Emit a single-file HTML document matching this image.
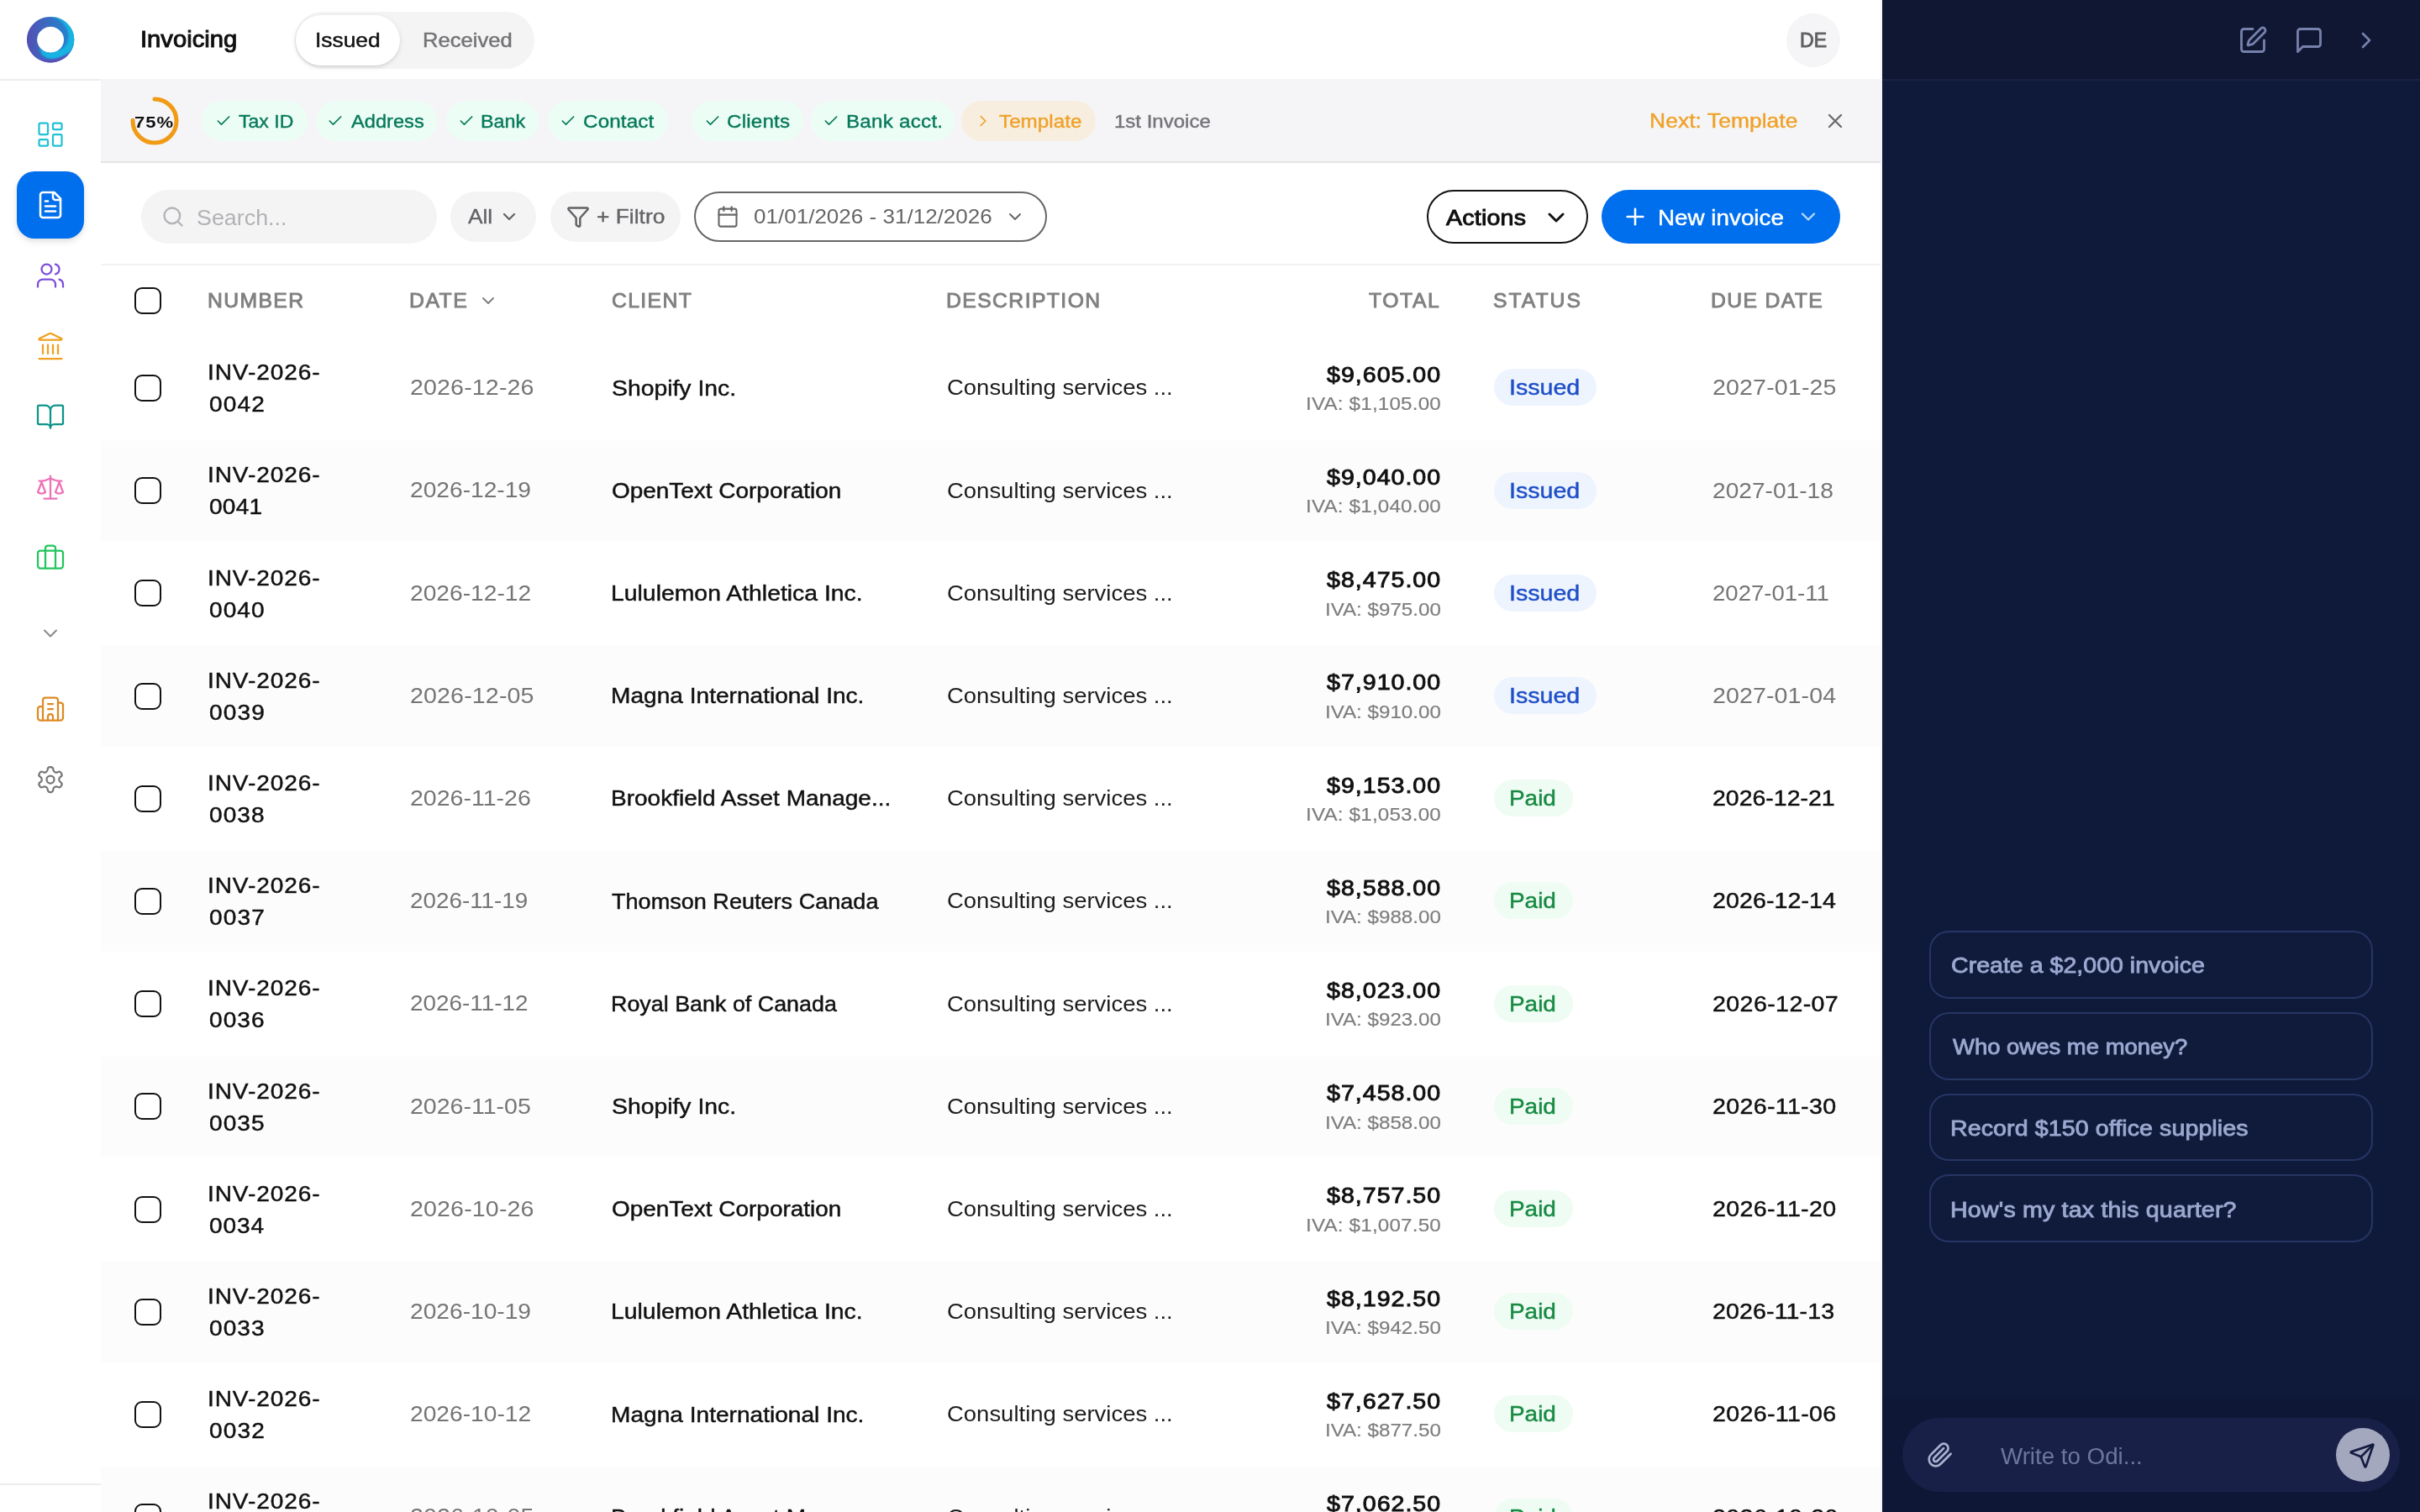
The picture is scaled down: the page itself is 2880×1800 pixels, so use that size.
<!DOCTYPE html>
<html lang="en"><head><meta charset="utf-8"><title>Invoicing</title>
<style>
html,body{margin:0;padding:0}
body{width:2880px;height:1800px;overflow:hidden;position:relative;background:#fff;
font-family:"Liberation Sans",sans-serif;-webkit-font-smoothing:antialiased}
#app{position:absolute;left:0;top:0;width:2880px;height:1800px;will-change:transform}
@media (max-width:2000px){body{width:1440px;height:900px}#app{transform:scale(.5);transform-origin:0 0}}
.b{position:absolute;box-sizing:content-box}
.t{position:absolute;white-space:nowrap;display:block;transform-origin:0 50%}
.i{position:absolute;display:block;overflow:visible}
.n{font-style:normal;margin:0 -.0625em}
</style></head>
<body>
<div id="app">
<div class="b" style="left:0px;top:0px;width:2240px;height:1800px;background:#fff;"></div>
<main aria-label="Issued invoices">
<div class="b" style="left:160px;top:446.00px;width:28px;height:28px;border:2px solid #111;border-radius:9px;background:#fff;"></div>
<span class="t" style="top:424.29px;font-size:25.5px;line-height:38px;color:#111;letter-spacing:0.817px;transform:scaleX(1.1000);-webkit-text-stroke:0.45px #111;left:246.99px;">INV-2026-</span>
<span class="t" style="top:462.29px;font-size:25.5px;line-height:38px;color:#111;letter-spacing:1.057px;transform:scaleX(1.1000);-webkit-text-stroke:0.45px #111;left:248.50px;">0042</span>
<span class="t" style="top:442.10px;font-size:26px;line-height:38px;color:#757575;letter-spacing:0.122px;transform:scaleX(1.1000);left:488.23px;">2026-12-26</span>
<span class="t" style="top:442.50px;font-size:26px;line-height:38px;color:#111;transform:scaleX(1.0901);-webkit-text-stroke:0.45px #111;left:727.67px;">Shopify Inc.</span>
<span class="t" style="top:442.30px;font-size:26px;line-height:38px;color:#1c1c1c;transform:scaleX(1.0564);left:1127.08px;">Consulting services ...</span>
<span class="t" style="top:426.70px;font-size:26px;line-height:38px;color:#111;letter-spacing:0.903px;transform:scaleX(1.1000);-webkit-text-stroke:0.9px #111;left:1579.22px;">$9,605.00</span>
<span class="t" style="top:465.15px;font-size:22px;line-height:32px;color:#7e7e7e;letter-spacing:0.172px;transform:scaleX(1.1000);-webkit-text-stroke:0.2px #7e7e7e;left:1553.50px;">IVA: $1,105.00</span>
<div class="b" style="left:1778px;top:439.40px;width:122px;height:44px;background:#eef4fe;border-radius:22px;"></div>
<span class="t" style="top:442.30px;font-size:26px;line-height:38px;color:#1f4fc8;transform:scaleX(1.0993);-webkit-text-stroke:0.45px #1f4fc8;left:1796.19px;">Issued</span>
<span class="t" style="top:442.30px;font-size:26px;line-height:38px;color:#757575;letter-spacing:0.122px;transform:scaleX(1.1000);left:2037.83px;">2027-01-25</span>
<div class="b" style="left:120px;top:524.40px;width:2120px;height:119.80px;background:#fcfcfc;"></div>
<div class="b" style="left:160px;top:568.20px;width:28px;height:28px;border:2px solid #111;border-radius:9px;background:#fff;"></div>
<span class="t" style="top:546.49px;font-size:25.5px;line-height:38px;color:#111;letter-spacing:0.817px;transform:scaleX(1.1000);-webkit-text-stroke:0.45px #111;left:246.99px;">INV-2026-</span>
<span class="t" style="top:584.49px;font-size:25.5px;line-height:38px;color:#111;letter-spacing:0.227px;transform:scaleX(1.1000);-webkit-text-stroke:0.45px #111;left:248.50px;">0041</span>
<span class="t" style="top:564.30px;font-size:26px;line-height:38px;color:#757575;transform:scaleX(1.0828);left:488.25px;">2026-12-19</span>
<span class="t" style="top:564.70px;font-size:26px;line-height:38px;color:#111;transform:scaleX(1.0745);-webkit-text-stroke:0.45px #111;left:727.56px;">OpenText Corporation</span>
<span class="t" style="top:564.50px;font-size:26px;line-height:38px;color:#1c1c1c;transform:scaleX(1.0564);left:1127.08px;">Consulting services ...</span>
<span class="t" style="top:548.90px;font-size:26px;line-height:38px;color:#111;letter-spacing:0.903px;transform:scaleX(1.1000);-webkit-text-stroke:0.9px #111;left:1579.22px;">$9,040.00</span>
<span class="t" style="top:587.35px;font-size:22px;line-height:32px;color:#7e7e7e;letter-spacing:0.172px;transform:scaleX(1.1000);-webkit-text-stroke:0.2px #7e7e7e;left:1553.50px;">IVA: $1,040.00</span>
<div class="b" style="left:1778px;top:561.60px;width:122px;height:44px;background:#eef4fe;border-radius:22px;"></div>
<span class="t" style="top:564.50px;font-size:26px;line-height:38px;color:#1f4fc8;transform:scaleX(1.0993);-webkit-text-stroke:0.45px #1f4fc8;left:1796.19px;">Issued</span>
<span class="t" style="top:564.50px;font-size:26px;line-height:38px;color:#757575;transform:scaleX(1.0817);left:2037.85px;">2027-01-18</span>
<div class="b" style="left:160px;top:690.40px;width:28px;height:28px;border:2px solid #111;border-radius:9px;background:#fff;"></div>
<span class="t" style="top:668.69px;font-size:25.5px;line-height:38px;color:#111;letter-spacing:0.817px;transform:scaleX(1.1000);-webkit-text-stroke:0.45px #111;left:246.99px;">INV-2026-</span>
<span class="t" style="top:706.69px;font-size:25.5px;line-height:38px;color:#111;letter-spacing:0.932px;transform:scaleX(1.1000);-webkit-text-stroke:0.45px #111;left:248.50px;">0040</span>
<span class="t" style="top:686.50px;font-size:26px;line-height:38px;color:#757575;transform:scaleX(1.0838);left:488.25px;">2026-12-12</span>
<span class="t" style="top:686.90px;font-size:26px;line-height:38px;color:#111;transform:scaleX(1.0913);-webkit-text-stroke:0.45px #111;left:726.58px;">Lululemon Athletica Inc.</span>
<span class="t" style="top:686.70px;font-size:26px;line-height:38px;color:#1c1c1c;transform:scaleX(1.0564);left:1127.08px;">Consulting services ...</span>
<span class="t" style="top:671.10px;font-size:26px;line-height:38px;color:#111;letter-spacing:0.903px;transform:scaleX(1.1000);-webkit-text-stroke:0.9px #111;left:1579.22px;">$8,475.00</span>
<span class="t" style="top:709.55px;font-size:22px;line-height:32px;color:#7e7e7e;transform:scaleX(1.0974);-webkit-text-stroke:0.2px #7e7e7e;left:1576.51px;">IVA: $975.00</span>
<div class="b" style="left:1778px;top:683.80px;width:122px;height:44px;background:#eef4fe;border-radius:22px;"></div>
<span class="t" style="top:686.70px;font-size:26px;line-height:38px;color:#1f4fc8;transform:scaleX(1.0993);-webkit-text-stroke:0.45px #1f4fc8;left:1796.19px;">Issued</span>
<span class="t" style="top:686.70px;font-size:26px;line-height:38px;color:#757575;transform:scaleX(1.0597);left:2037.88px;">2027-01-11</span>
<div class="b" style="left:120px;top:768.80px;width:2120px;height:119.80px;background:#fcfcfc;"></div>
<div class="b" style="left:160px;top:812.60px;width:28px;height:28px;border:2px solid #111;border-radius:9px;background:#fff;"></div>
<span class="t" style="top:790.89px;font-size:25.5px;line-height:38px;color:#111;letter-spacing:0.817px;transform:scaleX(1.1000);-webkit-text-stroke:0.45px #111;left:246.99px;">INV-2026-</span>
<span class="t" style="top:828.89px;font-size:25.5px;line-height:38px;color:#111;letter-spacing:1.015px;transform:scaleX(1.1000);-webkit-text-stroke:0.45px #111;left:248.50px;">0039</span>
<span class="t" style="top:808.70px;font-size:26px;line-height:38px;color:#757575;letter-spacing:0.122px;transform:scaleX(1.1000);left:488.23px;">2026-12-05</span>
<span class="t" style="top:809.10px;font-size:26px;line-height:38px;color:#111;transform:scaleX(1.0805);-webkit-text-stroke:0.45px #111;left:726.60px;">Magna International Inc.</span>
<span class="t" style="top:808.90px;font-size:26px;line-height:38px;color:#1c1c1c;transform:scaleX(1.0564);left:1127.08px;">Consulting services ...</span>
<span class="t" style="top:793.30px;font-size:26px;line-height:38px;color:#111;letter-spacing:0.903px;transform:scaleX(1.1000);-webkit-text-stroke:0.9px #111;left:1579.22px;">$7,910.00</span>
<span class="t" style="top:831.75px;font-size:22px;line-height:32px;color:#7e7e7e;transform:scaleX(1.0974);-webkit-text-stroke:0.2px #7e7e7e;left:1576.51px;">IVA: $910.00</span>
<div class="b" style="left:1778px;top:806.00px;width:122px;height:44px;background:#eef4fe;border-radius:22px;"></div>
<span class="t" style="top:808.90px;font-size:26px;line-height:38px;color:#1f4fc8;transform:scaleX(1.0993);-webkit-text-stroke:0.45px #1f4fc8;left:1796.19px;">Issued</span>
<span class="t" style="top:808.90px;font-size:26px;line-height:38px;color:#757575;letter-spacing:0.081px;transform:scaleX(1.1000);left:2037.83px;">2027-01-04</span>
<div class="b" style="left:160px;top:934.80px;width:28px;height:28px;border:2px solid #111;border-radius:9px;background:#fff;"></div>
<span class="t" style="top:913.09px;font-size:25.5px;line-height:38px;color:#111;letter-spacing:0.817px;transform:scaleX(1.1000);-webkit-text-stroke:0.45px #111;left:246.99px;">INV-2026-</span>
<span class="t" style="top:951.09px;font-size:25.5px;line-height:38px;color:#111;letter-spacing:0.973px;transform:scaleX(1.1000);-webkit-text-stroke:0.45px #111;left:248.50px;">0038</span>
<span class="t" style="top:930.90px;font-size:26px;line-height:38px;color:#757575;transform:scaleX(1.0975);left:488.23px;">2026-11-26</span>
<span class="t" style="top:931.30px;font-size:26px;line-height:38px;color:#111;transform:scaleX(1.0775);-webkit-text-stroke:0.45px #111;left:726.61px;">Brookfield Asset Manage...</span>
<span class="t" style="top:931.10px;font-size:26px;line-height:38px;color:#1c1c1c;transform:scaleX(1.0564);left:1127.08px;">Consulting services ...</span>
<span class="t" style="top:915.50px;font-size:26px;line-height:38px;color:#111;letter-spacing:0.903px;transform:scaleX(1.1000);-webkit-text-stroke:0.9px #111;left:1579.22px;">$9,153.00</span>
<span class="t" style="top:953.95px;font-size:22px;line-height:32px;color:#7e7e7e;letter-spacing:0.172px;transform:scaleX(1.1000);-webkit-text-stroke:0.2px #7e7e7e;left:1553.50px;">IVA: $1,053.00</span>
<div class="b" style="left:1778px;top:928.20px;width:93.5px;height:44px;background:#effcf3;border-radius:22px;"></div>
<span class="t" style="top:931.10px;font-size:26px;line-height:38px;color:#178a43;transform:scaleX(1.0736);-webkit-text-stroke:0.45px #178a43;left:1796.32px;">Paid</span>
<span class="t" style="top:931.10px;font-size:26px;line-height:38px;color:#111;transform:scaleX(1.0950);-webkit-text-stroke:0.45px #111;left:2038.03px;">2026-12-21</span>
<div class="b" style="left:120px;top:1013.20px;width:2120px;height:119.80px;background:#fcfcfc;"></div>
<div class="b" style="left:160px;top:1057.00px;width:28px;height:28px;border:2px solid #111;border-radius:9px;background:#fff;"></div>
<span class="t" style="top:1035.29px;font-size:25.5px;line-height:38px;color:#111;letter-spacing:0.817px;transform:scaleX(1.1000);-webkit-text-stroke:0.45px #111;left:246.99px;">INV-2026-</span>
<span class="t" style="top:1073.29px;font-size:25.5px;line-height:38px;color:#111;letter-spacing:1.057px;transform:scaleX(1.1000);-webkit-text-stroke:0.45px #111;left:248.50px;">0037</span>
<span class="t" style="top:1053.10px;font-size:26px;line-height:38px;color:#757575;transform:scaleX(1.0706);left:488.26px;">2026-11-19</span>
<span class="t" style="top:1053.50px;font-size:26px;line-height:38px;color:#111;transform:scaleX(1.0411);-webkit-text-stroke:0.45px #111;left:728.38px;">Thomson Reuters Canada</span>
<span class="t" style="top:1053.30px;font-size:26px;line-height:38px;color:#1c1c1c;transform:scaleX(1.0564);left:1127.08px;">Consulting services ...</span>
<span class="t" style="top:1037.70px;font-size:26px;line-height:38px;color:#111;letter-spacing:0.903px;transform:scaleX(1.1000);-webkit-text-stroke:0.9px #111;left:1579.22px;">$8,588.00</span>
<span class="t" style="top:1076.15px;font-size:22px;line-height:32px;color:#7e7e7e;transform:scaleX(1.0974);-webkit-text-stroke:0.2px #7e7e7e;left:1576.51px;">IVA: $988.00</span>
<div class="b" style="left:1778px;top:1050.40px;width:93.5px;height:44px;background:#effcf3;border-radius:22px;"></div>
<span class="t" style="top:1053.30px;font-size:26px;line-height:38px;color:#178a43;transform:scaleX(1.0736);-webkit-text-stroke:0.45px #178a43;left:1796.32px;">Paid</span>
<span class="t" style="top:1053.30px;font-size:26px;line-height:38px;color:#111;letter-spacing:0.061px;transform:scaleX(1.1000);-webkit-text-stroke:0.45px #111;left:2038.03px;">2026-12-14</span>
<div class="b" style="left:160px;top:1179.20px;width:28px;height:28px;border:2px solid #111;border-radius:9px;background:#fff;"></div>
<span class="t" style="top:1157.49px;font-size:25.5px;line-height:38px;color:#111;letter-spacing:0.817px;transform:scaleX(1.1000);-webkit-text-stroke:0.45px #111;left:246.99px;">INV-2026-</span>
<span class="t" style="top:1195.49px;font-size:25.5px;line-height:38px;color:#111;letter-spacing:0.973px;transform:scaleX(1.1000);-webkit-text-stroke:0.45px #111;left:248.50px;">0036</span>
<span class="t" style="top:1175.30px;font-size:26px;line-height:38px;color:#757575;transform:scaleX(1.0716);left:488.26px;">2026-11-12</span>
<span class="t" style="top:1175.70px;font-size:26px;line-height:38px;color:#111;transform:scaleX(1.0336);-webkit-text-stroke:0.45px #111;left:726.70px;">Royal Bank of Canada</span>
<span class="t" style="top:1175.50px;font-size:26px;line-height:38px;color:#1c1c1c;transform:scaleX(1.0564);left:1127.08px;">Consulting services ...</span>
<span class="t" style="top:1159.90px;font-size:26px;line-height:38px;color:#111;letter-spacing:0.903px;transform:scaleX(1.1000);-webkit-text-stroke:0.9px #111;left:1579.22px;">$8,023.00</span>
<span class="t" style="top:1198.35px;font-size:22px;line-height:32px;color:#7e7e7e;transform:scaleX(1.0974);-webkit-text-stroke:0.2px #7e7e7e;left:1576.51px;">IVA: $923.00</span>
<div class="b" style="left:1778px;top:1172.60px;width:93.5px;height:44px;background:#effcf3;border-radius:22px;"></div>
<span class="t" style="top:1175.50px;font-size:26px;line-height:38px;color:#178a43;transform:scaleX(1.0736);-webkit-text-stroke:0.45px #178a43;left:1796.32px;">Paid</span>
<span class="t" style="top:1175.50px;font-size:26px;line-height:38px;color:#111;letter-spacing:0.352px;transform:scaleX(1.1000);-webkit-text-stroke:0.45px #111;left:2038.03px;">2026-12-07</span>
<div class="b" style="left:120px;top:1257.60px;width:2120px;height:119.80px;background:#fcfcfc;"></div>
<div class="b" style="left:160px;top:1301.40px;width:28px;height:28px;border:2px solid #111;border-radius:9px;background:#fff;"></div>
<span class="t" style="top:1279.69px;font-size:25.5px;line-height:38px;color:#111;letter-spacing:0.817px;transform:scaleX(1.1000);-webkit-text-stroke:0.45px #111;left:246.99px;">INV-2026-</span>
<span class="t" style="top:1317.69px;font-size:25.5px;line-height:38px;color:#111;letter-spacing:0.973px;transform:scaleX(1.1000);-webkit-text-stroke:0.45px #111;left:248.50px;">0035</span>
<span class="t" style="top:1297.50px;font-size:26px;line-height:38px;color:#757575;transform:scaleX(1.0975);left:488.23px;">2026-11-05</span>
<span class="t" style="top:1297.90px;font-size:26px;line-height:38px;color:#111;transform:scaleX(1.0901);-webkit-text-stroke:0.45px #111;left:727.67px;">Shopify Inc.</span>
<span class="t" style="top:1297.70px;font-size:26px;line-height:38px;color:#1c1c1c;transform:scaleX(1.0564);left:1127.08px;">Consulting services ...</span>
<span class="t" style="top:1282.10px;font-size:26px;line-height:38px;color:#111;letter-spacing:0.903px;transform:scaleX(1.1000);-webkit-text-stroke:0.9px #111;left:1579.22px;">$7,458.00</span>
<span class="t" style="top:1320.55px;font-size:22px;line-height:32px;color:#7e7e7e;transform:scaleX(1.0974);-webkit-text-stroke:0.2px #7e7e7e;left:1576.51px;">IVA: $858.00</span>
<div class="b" style="left:1778px;top:1294.80px;width:93.5px;height:44px;background:#effcf3;border-radius:22px;"></div>
<span class="t" style="top:1297.70px;font-size:26px;line-height:38px;color:#178a43;transform:scaleX(1.0736);-webkit-text-stroke:0.45px #178a43;left:1796.32px;">Paid</span>
<span class="t" style="top:1297.70px;font-size:26px;line-height:38px;color:#111;letter-spacing:0.297px;transform:scaleX(1.1000);-webkit-text-stroke:0.45px #111;left:2038.03px;">2026-11-30</span>
<div class="b" style="left:160px;top:1423.60px;width:28px;height:28px;border:2px solid #111;border-radius:9px;background:#fff;"></div>
<span class="t" style="top:1401.89px;font-size:25.5px;line-height:38px;color:#111;letter-spacing:0.817px;transform:scaleX(1.1000);-webkit-text-stroke:0.45px #111;left:246.99px;">INV-2026-</span>
<span class="t" style="top:1439.89px;font-size:25.5px;line-height:38px;color:#111;letter-spacing:0.848px;transform:scaleX(1.1000);-webkit-text-stroke:0.45px #111;left:248.50px;">0034</span>
<span class="t" style="top:1419.70px;font-size:26px;line-height:38px;color:#757575;letter-spacing:0.122px;transform:scaleX(1.1000);left:488.23px;">2026-10-26</span>
<span class="t" style="top:1420.10px;font-size:26px;line-height:38px;color:#111;transform:scaleX(1.0745);-webkit-text-stroke:0.45px #111;left:727.56px;">OpenText Corporation</span>
<span class="t" style="top:1419.90px;font-size:26px;line-height:38px;color:#1c1c1c;transform:scaleX(1.0564);left:1127.08px;">Consulting services ...</span>
<span class="t" style="top:1404.30px;font-size:26px;line-height:38px;color:#111;letter-spacing:0.903px;transform:scaleX(1.1000);-webkit-text-stroke:0.9px #111;left:1579.22px;">$8,757.50</span>
<span class="t" style="top:1442.75px;font-size:22px;line-height:32px;color:#7e7e7e;letter-spacing:0.172px;transform:scaleX(1.1000);-webkit-text-stroke:0.2px #7e7e7e;left:1553.50px;">IVA: $1,007.50</span>
<div class="b" style="left:1778px;top:1417.00px;width:93.5px;height:44px;background:#effcf3;border-radius:22px;"></div>
<span class="t" style="top:1419.90px;font-size:26px;line-height:38px;color:#178a43;transform:scaleX(1.0736);-webkit-text-stroke:0.45px #178a43;left:1796.32px;">Paid</span>
<span class="t" style="top:1419.90px;font-size:26px;line-height:38px;color:#111;letter-spacing:0.297px;transform:scaleX(1.1000);-webkit-text-stroke:0.45px #111;left:2038.03px;">2026-11-20</span>
<div class="b" style="left:120px;top:1502.00px;width:2120px;height:119.80px;background:#fcfcfc;"></div>
<div class="b" style="left:160px;top:1545.80px;width:28px;height:28px;border:2px solid #111;border-radius:9px;background:#fff;"></div>
<span class="t" style="top:1524.09px;font-size:25.5px;line-height:38px;color:#111;letter-spacing:0.817px;transform:scaleX(1.1000);-webkit-text-stroke:0.45px #111;left:246.99px;">INV-2026-</span>
<span class="t" style="top:1562.09px;font-size:25.5px;line-height:38px;color:#111;letter-spacing:0.973px;transform:scaleX(1.1000);-webkit-text-stroke:0.45px #111;left:248.50px;">0033</span>
<span class="t" style="top:1541.90px;font-size:26px;line-height:38px;color:#757575;transform:scaleX(1.0828);left:488.25px;">2026-10-19</span>
<span class="t" style="top:1542.30px;font-size:26px;line-height:38px;color:#111;transform:scaleX(1.0913);-webkit-text-stroke:0.45px #111;left:726.58px;">Lululemon Athletica Inc.</span>
<span class="t" style="top:1542.10px;font-size:26px;line-height:38px;color:#1c1c1c;transform:scaleX(1.0564);left:1127.08px;">Consulting services ...</span>
<span class="t" style="top:1526.50px;font-size:26px;line-height:38px;color:#111;letter-spacing:0.903px;transform:scaleX(1.1000);-webkit-text-stroke:0.9px #111;left:1579.22px;">$8,192.50</span>
<span class="t" style="top:1564.95px;font-size:22px;line-height:32px;color:#7e7e7e;transform:scaleX(1.0974);-webkit-text-stroke:0.2px #7e7e7e;left:1576.51px;">IVA: $942.50</span>
<div class="b" style="left:1778px;top:1539.20px;width:93.5px;height:44px;background:#effcf3;border-radius:22px;"></div>
<span class="t" style="top:1542.10px;font-size:26px;line-height:38px;color:#178a43;transform:scaleX(1.0736);-webkit-text-stroke:0.45px #178a43;left:1796.32px;">Paid</span>
<span class="t" style="top:1542.10px;font-size:26px;line-height:38px;color:#111;letter-spacing:0.088px;transform:scaleX(1.1000);-webkit-text-stroke:0.45px #111;left:2038.03px;">2026-11-13</span>
<div class="b" style="left:160px;top:1668.00px;width:28px;height:28px;border:2px solid #111;border-radius:9px;background:#fff;"></div>
<span class="t" style="top:1646.29px;font-size:25.5px;line-height:38px;color:#111;letter-spacing:0.817px;transform:scaleX(1.1000);-webkit-text-stroke:0.45px #111;left:246.99px;">INV-2026-</span>
<span class="t" style="top:1684.29px;font-size:25.5px;line-height:38px;color:#111;letter-spacing:1.057px;transform:scaleX(1.1000);-webkit-text-stroke:0.45px #111;left:248.50px;">0032</span>
<span class="t" style="top:1664.10px;font-size:26px;line-height:38px;color:#757575;transform:scaleX(1.0838);left:488.25px;">2026-10-12</span>
<span class="t" style="top:1664.50px;font-size:26px;line-height:38px;color:#111;transform:scaleX(1.0805);-webkit-text-stroke:0.45px #111;left:726.60px;">Magna International Inc.</span>
<span class="t" style="top:1664.30px;font-size:26px;line-height:38px;color:#1c1c1c;transform:scaleX(1.0564);left:1127.08px;">Consulting services ...</span>
<span class="t" style="top:1648.70px;font-size:26px;line-height:38px;color:#111;letter-spacing:0.903px;transform:scaleX(1.1000);-webkit-text-stroke:0.9px #111;left:1579.22px;">$7,627.50</span>
<span class="t" style="top:1687.15px;font-size:22px;line-height:32px;color:#7e7e7e;transform:scaleX(1.0974);-webkit-text-stroke:0.2px #7e7e7e;left:1576.51px;">IVA: $877.50</span>
<div class="b" style="left:1778px;top:1661.40px;width:93.5px;height:44px;background:#effcf3;border-radius:22px;"></div>
<span class="t" style="top:1664.30px;font-size:26px;line-height:38px;color:#178a43;transform:scaleX(1.0736);-webkit-text-stroke:0.45px #178a43;left:1796.32px;">Paid</span>
<span class="t" style="top:1664.30px;font-size:26px;line-height:38px;color:#111;letter-spacing:0.311px;transform:scaleX(1.1000);-webkit-text-stroke:0.45px #111;left:2038.03px;">2026-11-06</span>
<div class="b" style="left:120px;top:1746.40px;width:2120px;height:119.80px;background:#fcfcfc;"></div>
<div class="b" style="left:160px;top:1790.20px;width:28px;height:28px;border:2px solid #111;border-radius:9px;background:#fff;"></div>
<span class="t" style="top:1768.49px;font-size:25.5px;line-height:38px;color:#111;letter-spacing:0.817px;transform:scaleX(1.1000);-webkit-text-stroke:0.45px #111;left:246.99px;">INV-2026-</span>
<span class="t" style="top:1806.49px;font-size:25.5px;line-height:38px;color:#111;letter-spacing:0.227px;transform:scaleX(1.1000);-webkit-text-stroke:0.45px #111;left:248.50px;">0031</span>
<span class="t" style="top:1786.30px;font-size:26px;line-height:38px;color:#757575;letter-spacing:0.122px;transform:scaleX(1.1000);left:488.23px;">2026-10-05</span>
<span class="t" style="top:1786.70px;font-size:26px;line-height:38px;color:#111;transform:scaleX(1.0775);-webkit-text-stroke:0.45px #111;left:726.61px;">Brookfield Asset Manage...</span>
<span class="t" style="top:1786.50px;font-size:26px;line-height:38px;color:#1c1c1c;transform:scaleX(1.0564);left:1127.08px;">Consulting services ...</span>
<span class="t" style="top:1770.90px;font-size:26px;line-height:38px;color:#111;letter-spacing:0.903px;transform:scaleX(1.1000);-webkit-text-stroke:0.9px #111;left:1579.22px;">$7,062.50</span>
<span class="t" style="top:1809.35px;font-size:22px;line-height:32px;color:#7e7e7e;transform:scaleX(1.0974);-webkit-text-stroke:0.2px #7e7e7e;left:1576.51px;">IVA: $812.50</span>
<div class="b" style="left:1778px;top:1783.60px;width:93.5px;height:44px;background:#effcf3;border-radius:22px;"></div>
<span class="t" style="top:1786.50px;font-size:26px;line-height:38px;color:#178a43;transform:scaleX(1.0736);-webkit-text-stroke:0.45px #178a43;left:1796.32px;">Paid</span>
<span class="t" style="top:1786.50px;font-size:26px;line-height:38px;color:#111;letter-spacing:0.311px;transform:scaleX(1.1000);-webkit-text-stroke:0.45px #111;left:2038.03px;">2026-10-30</span>
<div class="b" style="left:120px;top:316px;width:2120px;height:85px;background:#fff;"></div>
<div class="b" style="left:160px;top:342px;width:28px;height:28px;border:2px solid #111;border-radius:9px;background:#fff;"></div>
<span class="t" style="top:340.28px;font-size:24px;line-height:36px;color:#808080;letter-spacing:1.340px;transform:scaleX(1.0300);-webkit-text-stroke:0.9px #808080;left:246.94px;">NUMBER</span>
<span class="t" style="top:340.28px;font-size:24px;line-height:36px;color:#808080;letter-spacing:1.480px;transform:scaleX(1.0300);-webkit-text-stroke:0.9px #808080;left:486.94px;">DATE</span>
<span class="t" style="top:340.28px;font-size:24px;line-height:36px;color:#808080;letter-spacing:1.333px;transform:scaleX(1.0300);-webkit-text-stroke:0.9px #808080;left:727.71px;">CLIENT</span>
<span class="t" style="top:340.28px;font-size:24px;line-height:36px;color:#808080;letter-spacing:1.379px;transform:scaleX(1.0300);-webkit-text-stroke:0.9px #808080;left:1125.94px;">DESCRIPTION</span>
<span class="t" style="top:340.28px;font-size:24px;line-height:36px;color:#808080;letter-spacing:1.531px;transform:scaleX(1.0300);-webkit-text-stroke:0.9px #808080;left:1629.48px;">TOTAL</span>
<span class="t" style="top:340.28px;font-size:24px;line-height:36px;color:#808080;letter-spacing:1.953px;transform:scaleX(1.0300);-webkit-text-stroke:0.9px #808080;left:1776.84px;">STATUS</span>
<span class="t" style="top:340.28px;font-size:24px;line-height:36px;color:#808080;letter-spacing:1.318px;transform:scaleX(1.0300);-webkit-text-stroke:0.9px #808080;left:2035.94px;">DUE DATE</span>
<svg class="i" style="left:568.50px;top:346.00px;" width="24" height="24" viewBox="0 0 24 24" fill="none" stroke="#808080" stroke-width="2" stroke-linecap="round" stroke-linejoin="round"><path d="m6 9 6 6 6-6"/></svg>
</main>
<header aria-label="Invoicing">
<div class="b" style="left:0px;top:0px;width:2240px;height:94px;background:#fff;"></div>
<div class="b" style="left:0px;top:94px;width:120px;height:2px;background:#ececee;"></div>
<svg class="i" style="left:28px;top:16px" width="64" height="64" viewBox="0 0 64 64"><defs><linearGradient id="lg" gradientUnits="userSpaceOnUse" x1="4" y1="30" x2="60" y2="30"><stop offset="0" stop-color="#544eb3"/><stop offset="0.25" stop-color="#4460bb"/><stop offset="0.6" stop-color="#2f76c7"/><stop offset="1" stop-color="#2384cf"/></linearGradient><clipPath id="ring"><path clip-rule="evenodd" d="M32.1 3.9a28.2 27.25 0 1 0 .01 0zM32.1 15.8a16 15.5 0 1 1-.01 0z"/></clipPath><filter id="bl" x="-20%" y="-20%" width="140%" height="140%"><feGaussianBlur stdDeviation="0.8"/></filter></defs><g clip-path="url(#ring)"><rect width="64" height="64" fill="url(#lg)"/><path filter="url(#bl)" fill="#14b3e3" d="M32.1 2.1L34.6 2.1L37.2 2.3L39.7 2.7L42.2 3.4L44.6 4.3L47.0 5.4L49.2 6.7L51.3 8.2L53.3 9.9L55.1 11.9L56.7 13.9L58.1 16.1L59.3 18.5L60.3 20.9L61.1 23.4L61.6 25.9L62.0 28.5L62.1 31.1L61.7 33.7L61.1 36.3L60.3 38.7L59.2 41.0L58.0 43.2L56.6 45.3L54.7 46.9L52.6 48.4L50.5 49.5L48.4 50.6L46.4 51.5L44.2 52.2L42.3 53.0L40.3 53.7L38.3 54.1L36.2 54.4L34.1 54.5L32.1 54.5L30.1 53.9L28.2 53.2L26.4 52.3L24.8 51.3L23.2 50.2L21.9 48.9L20.9 47.1L20.2 45.3L19.7 43.5L19.3 41.9L19.1 40.2L19.1 38.7L18.7 37.4L18.5 36.1L18.5 36.1L19.0 37.3L19.5 38.4L20.2 39.5L21.0 40.5L21.8 41.4L22.8 42.3L23.8 43.0L24.9 43.7L26.0 44.3L27.1 44.8L28.3 45.2L29.6 45.4L30.8 45.6L32.1 45.6L33.4 45.6L34.6 45.4L35.9 45.2L37.1 44.8L38.2 44.3L39.4 43.7L40.8 43.6L42.3 43.3L43.8 42.8L45.3 42.2L46.7 41.4L48.1 40.4L49.2 39.1L50.3 37.8L51.2 36.3L52.0 34.7L52.6 32.9L53.1 31.1L53.4 29.3L53.4 27.4L53.4 25.5L53.1 23.5L52.6 21.6L52.0 19.6L51.2 17.8L50.2 15.9L49.1 14.2L47.8 12.4L46.3 10.8L44.7 9.3L42.9 7.9L41.0 6.6L39.0 5.6L36.8 4.4L34.5 3.4L32.1 2.6z"/><path filter="url(#bl)" fill="#5a4db6" d="M62.6 36.5L62.0 39.2L61.2 41.8L60.2 44.3L58.9 46.6L57.5 48.9L55.8 51.1L54.0 53.1L52.0 54.9L49.9 56.5L47.6 58.0L45.2 59.2L42.7 60.3L40.1 61.1L37.5 61.7L34.8 62.0L32.1 62.1L29.4 62.0L26.7 61.7L24.1 61.1L21.5 60.3L19.0 59.2L16.6 58.0L14.3 56.5L15.5 54.9L18.2 55.3L20.8 55.3L23.4 55.1L25.6 55.2L27.9 55.2L30.0 54.9L32.1 54.5L34.1 54.5L36.2 54.4L38.3 54.1L40.3 53.7L42.3 53.0L44.2 52.2L46.4 51.5L48.4 50.6L50.5 49.5L52.6 48.4L54.7 46.9L56.6 45.3L58.1 43.3L59.5 41.1L60.7 38.8L61.6 36.4z"/></g></svg>
<span class="t" style="top:26.32px;font-size:28px;line-height:42px;color:#111;transform:scaleX(1.0428);-webkit-text-stroke:1.0px #111;left:167.19px;">Invoicing</span>
<div class="b" style="left:350px;top:14px;width:286px;height:68px;background:#f4f4f5;border-radius:34px;"></div>
<div class="b" style="left:352px;top:18px;width:124px;height:60px;background:#fff;border-radius:30px;box-shadow:0 2px 6px rgba(0,0,0,.10),0 1px 2px rgba(0,0,0,.08);"></div>
<span class="t" style="top:29.78px;font-size:24px;line-height:36px;color:#111;transform:scaleX(1.0980);-webkit-text-stroke:0.45px #111;left:374.67px;">Issued</span>
<span class="t" style="top:29.78px;font-size:24px;line-height:36px;color:#737376;transform:scaleX(1.0660);-webkit-text-stroke:0.45px #737376;left:502.87px;">Received</span>
<div class="b" style="left:2126px;top:16px;width:64px;height:64px;background:#f5f5f7;border-radius:32px;"></div>
<span class="t" style="top:30.86px;font-size:23px;line-height:34px;color:#5e5e60;transform:scaleX(1.0026);-webkit-text-stroke:0.8px #5e5e60;left:2142.02px;">DE</span>
</header>
<nav aria-label="Sections">
<div class="b" style="left:0px;top:96px;width:120px;height:1704px;background:#fff;"></div>
<div class="b" style="left:0px;top:1766px;width:120px;height:2px;background:#ededed;"></div>
<div class="b" style="left:20px;top:204px;width:80px;height:80px;background:#006fee;border-radius:21px;box-shadow:0 4px 8px rgba(0,0,0,.09),0 2px 4px rgba(0,0,0,.05);"></div>
<svg class="i" style="left:42.00px;top:142.00px;" width="36" height="36" viewBox="0 0 24 24" fill="none" stroke="#22c1d6" stroke-width="1.5" stroke-linecap="round" stroke-linejoin="round"><rect width="7" height="9" x="3" y="3" rx="1"/><rect width="7" height="5" x="14" y="3" rx="1"/><rect width="7" height="9" x="14" y="12" rx="1"/><rect width="7" height="5" x="3" y="16" rx="1"/></svg>
<svg class="i" style="left:42.00px;top:226.00px;" width="36" height="36" viewBox="0 0 24 24" fill="none" stroke="#fff" stroke-width="1.7" stroke-linecap="round" stroke-linejoin="round"><path d="M15 2H6a2 2 0 0 0-2 2v16a2 2 0 0 0 2 2h12a2 2 0 0 0 2-2V7Z"/><path d="M14 2v4a2 2 0 0 0 2 2h4"/><path d="M10 9H8"/><path d="M16 13H8"/><path d="M16 17H8"/></svg>
<svg class="i" style="left:42.00px;top:310.00px;" width="36" height="36" viewBox="0 0 24 24" fill="none" stroke="#7c4ddd" stroke-width="1.5" stroke-linecap="round" stroke-linejoin="round"><path d="M16 21v-2a4 4 0 0 0-4-4H6a4 4 0 0 0-4 4v2"/><circle cx="9" cy="7" r="4"/><path d="M22 21v-2a4 4 0 0 0-3-3.87"/><path d="M16 3.13a4 4 0 0 1 0 7.75"/></svg>
<svg class="i" style="left:42.00px;top:394.00px;" width="36" height="36" viewBox="0 0 24 24" fill="none" stroke="#f0a020" stroke-width="1.5" stroke-linecap="round" stroke-linejoin="round"><path d="M10 18v-7"/><path d="M11.12 2.198a2 2 0 0 1 1.76.006l7.866 3.847c.476.233.31.949-.22.949H3.474c-.53 0-.695-.716-.22-.949z"/><path d="M14 18v-7"/><path d="M18 18v-7"/><path d="M3 22h18"/><path d="M6 18v-7"/></svg>
<svg class="i" style="left:42.00px;top:478.00px;" width="36" height="36" viewBox="0 0 24 24" fill="none" stroke="#0d9488" stroke-width="1.5" stroke-linecap="round" stroke-linejoin="round"><path d="M12 7v14"/><path d="M3 18a1 1 0 0 1-1-1V4a1 1 0 0 1 1-1h5a4 4 0 0 1 4 4 4 4 0 0 1 4-4h5a1 1 0 0 1 1 1v13a1 1 0 0 1-1 1h-6a3 3 0 0 0-3 3 3 3 0 0 0-3-3z"/></svg>
<svg class="i" style="left:42.00px;top:562.00px;" width="36" height="36" viewBox="0 0 24 24" fill="none" stroke="#ee72b8" stroke-width="1.5" stroke-linecap="round" stroke-linejoin="round"><path d="m16 16 3-8 3 8c-.87.65-1.92 1-3 1s-2.13-.35-3-1Z"/><path d="m2 16 3-8 3 8c-.87.65-1.92 1-3 1s-2.13-.35-3-1Z"/><path d="M7 21h10"/><path d="M12 3v18"/><path d="M3 7h2c2 0 5-1 7-2 2 1 5 2 7 2h2"/></svg>
<svg class="i" style="left:42.00px;top:645.00px;" width="36" height="36" viewBox="0 0 24 24" fill="none" stroke="#22c55e" stroke-width="1.5" stroke-linecap="round" stroke-linejoin="round"><rect width="20" height="14" x="2" y="7" rx="2" ry="2"/><path d="M16 21V5a2 2 0 0 0-2-2h-4a2 2 0 0 0-2 2v16"/></svg>
<svg class="i" style="left:46.00px;top:740.00px;" width="28" height="28" viewBox="0 0 24 24" fill="none" stroke="#8a8a8a" stroke-width="1.8" stroke-linecap="round" stroke-linejoin="round"><path d="m6 9 6 6 6-6"/></svg>
<svg class="i" style="left:42.00px;top:826.00px;" width="36" height="36" viewBox="0 0 24 24" fill="none" stroke="#dd8a22" stroke-width="1.5" stroke-linecap="round" stroke-linejoin="round"><path d="M10 12h4"/><path d="M10 8h4"/><path d="M14 21v-3a2 2 0 0 0-4 0v3"/><path d="M6 10H4a2 2 0 0 0-2 2v7a2 2 0 0 0 2 2h16a2 2 0 0 0 2-2V9a2 2 0 0 0-2-2h-2"/><path d="M6 21V5a2 2 0 0 1 2-2h8a2 2 0 0 1 2 2v16"/></svg>
<svg class="i" style="left:42.00px;top:910.00px;" width="36" height="36" viewBox="0 0 24 24" fill="none" stroke="#777" stroke-width="1.5" stroke-linecap="round" stroke-linejoin="round"><path d="M12.22 2h-.44a2 2 0 0 0-2 2v.18a2 2 0 0 1-1 1.73l-.43.25a2 2 0 0 1-2 0l-.15-.08a2 2 0 0 0-2.73.73l-.22.38a2 2 0 0 0 .73 2.73l.15.1a2 2 0 0 1 1 1.72v.51a2 2 0 0 1-1 1.74l-.15.09a2 2 0 0 0-.73 2.73l.22.38a2 2 0 0 0 2.73.73l.15-.08a2 2 0 0 1 2 0l.43.25a2 2 0 0 1 1 1.73V20a2 2 0 0 0 2 2h.44a2 2 0 0 0 2-2v-.18a2 2 0 0 1 1-1.73l.43-.25a2 2 0 0 1 2 0l.15.08a2 2 0 0 0 2.73-.73l.22-.39a2 2 0 0 0-.73-2.73l-.15-.08a2 2 0 0 1-1-1.74v-.5a2 2 0 0 1 1-1.74l.15-.09a2 2 0 0 0 .73-2.73l-.22-.38a2 2 0 0 0-2.73-.73l-.15.08a2 2 0 0 1-2 0l-.43-.25a2 2 0 0 1-1-1.73V4a2 2 0 0 0-2-2z"/><circle cx="12" cy="12" r="3"/></svg>
</nav>
<section aria-label="Onboarding progress">
<div class="b" style="left:120px;top:94px;width:2120px;height:98px;background:#f5f5f7;"></div>
<div class="b" style="left:120px;top:192px;width:2120px;height:2px;background:#e4e4e7;"></div>
<svg class="i" style="left:152px;top:112px" width="64" height="64" viewBox="0 0 64 64"><circle cx="32" cy="32" r="26" fill="none" stroke="#f09a16" stroke-width="5" stroke-linecap="round" stroke-dasharray="122.5 200" transform="rotate(-90 32 32)"/></svg>
<span class="t" style="top:131.62px;font-size:19px;line-height:28px;color:#111;letter-spacing:0.892px;transform:scaleX(1.1600);font-weight:700;left:160.33px;">75%</span>
<div class="b" style="left:240px;top:120px;width:126px;height:48px;background:#ecfdf5;border-radius:24px;"></div>
<svg class="i" style="left:256.00px;top:134.00px;" width="20" height="20" viewBox="0 0 24 24" fill="none" stroke="#06795a" stroke-width="2" stroke-linecap="round" stroke-linejoin="round"><path d="M20 6 9 17l-5-5"/></svg>
<span class="t" style="top:128.75px;font-size:22px;line-height:32px;color:#06795a;transform:scaleX(1.0480);-webkit-text-stroke:0.4px #06795a;left:284.48px;">Tax ID</span>
<div class="b" style="left:376px;top:120px;width:144px;height:48px;background:#ecfdf5;border-radius:24px;"></div>
<svg class="i" style="left:389.00px;top:134.00px;" width="20" height="20" viewBox="0 0 24 24" fill="none" stroke="#06795a" stroke-width="2" stroke-linecap="round" stroke-linejoin="round"><path d="M20 6 9 17l-5-5"/></svg>
<span class="t" style="top:128.75px;font-size:22px;line-height:32px;color:#06795a;transform:scaleX(1.0750);-webkit-text-stroke:0.4px #06795a;left:418.00px;">Address</span>
<div class="b" style="left:531px;top:120px;width:110px;height:48px;background:#ecfdf5;border-radius:24px;"></div>
<svg class="i" style="left:545.00px;top:134.00px;" width="20" height="20" viewBox="0 0 24 24" fill="none" stroke="#06795a" stroke-width="2" stroke-linecap="round" stroke-linejoin="round"><path d="M20 6 9 17l-5-5"/></svg>
<span class="t" style="top:128.75px;font-size:22px;line-height:32px;color:#06795a;transform:scaleX(1.0584);-webkit-text-stroke:0.4px #06795a;left:571.95px;">Bank</span>
<div class="b" style="left:652px;top:120px;width:143px;height:48px;background:#ecfdf5;border-radius:24px;"></div>
<svg class="i" style="left:666.00px;top:134.00px;" width="20" height="20" viewBox="0 0 24 24" fill="none" stroke="#06795a" stroke-width="2" stroke-linecap="round" stroke-linejoin="round"><path d="M20 6 9 17l-5-5"/></svg>
<span class="t" style="top:128.75px;font-size:22px;line-height:32px;color:#06795a;letter-spacing:0.138px;transform:scaleX(1.1000);-webkit-text-stroke:0.4px #06795a;left:693.76px;">Contact</span>
<div class="b" style="left:823px;top:120px;width:133px;height:48px;background:#ecfdf5;border-radius:24px;"></div>
<svg class="i" style="left:838.00px;top:134.00px;" width="20" height="20" viewBox="0 0 24 24" fill="none" stroke="#06795a" stroke-width="2" stroke-linecap="round" stroke-linejoin="round"><path d="M20 6 9 17l-5-5"/></svg>
<span class="t" style="top:128.75px;font-size:22px;line-height:32px;color:#06795a;letter-spacing:0.165px;transform:scaleX(1.1000);-webkit-text-stroke:0.4px #06795a;left:864.76px;">Clients</span>
<div class="b" style="left:965px;top:120px;width:171px;height:48px;background:#ecfdf5;border-radius:24px;"></div>
<svg class="i" style="left:979.00px;top:134.00px;" width="20" height="20" viewBox="0 0 24 24" fill="none" stroke="#06795a" stroke-width="2" stroke-linecap="round" stroke-linejoin="round"><path d="M20 6 9 17l-5-5"/></svg>
<span class="t" style="top:128.75px;font-size:22px;line-height:32px;color:#06795a;letter-spacing:0.212px;transform:scaleX(1.1000);-webkit-text-stroke:0.4px #06795a;left:1007.08px;">Bank acct.</span>
<div class="b" style="left:1144px;top:120px;width:160px;height:48px;background:#f8eee0;border-radius:24px;"></div>
<svg class="i" style="left:1158.70px;top:133.20px;" width="22" height="22" viewBox="0 0 24 24" fill="none" stroke="#efa128" stroke-width="1.9" stroke-linecap="round" stroke-linejoin="round"><path d="m9 18 6-6-6-6"/></svg>
<span class="t" style="top:128.75px;font-size:22px;line-height:32px;color:#efa128;letter-spacing:0.023px;transform:scaleX(1.1000);-webkit-text-stroke:0.4px #efa128;left:1189.45px;">Template</span>
<span class="t" style="top:128.75px;font-size:22px;line-height:32px;color:#737378;transform:scaleX(1.0914);-webkit-text-stroke:0.4px #737378;left:1326.23px;">1st Invoice</span>
<span class="t" style="top:126.28px;font-size:24px;line-height:36px;color:#efa128;letter-spacing:0.059px;transform:scaleX(1.1000);-webkit-text-stroke:0.4px #efa128;left:1962.80px;">Next: Template</span>
<svg class="i" style="left:2170.00px;top:130.00px;" width="28" height="28" viewBox="0 0 24 24" fill="none" stroke="#6b6b6b" stroke-width="2.0" stroke-linecap="round" stroke-linejoin="round"><path d="M18 6 6 18"/><path d="m6 6 12 12"/></svg>
</section>
<section aria-label="Filters and actions">
<div class="b" style="left:120px;top:194px;width:2120px;height:120px;background:#fff;"></div>
<div class="b" style="left:120px;top:314px;width:2120px;height:2px;background:#f1f1f2;"></div>
<div class="b" style="left:168px;top:226px;width:352px;height:64px;background:#f4f4f5;border-radius:32px;"></div>
<svg class="i" style="left:192.00px;top:244.00px;" width="28" height="28" viewBox="0 0 24 24" fill="none" stroke="#b3b3b8" stroke-width="2" stroke-linecap="round" stroke-linejoin="round"><circle cx="11" cy="11" r="8"/><path d="m21 21-4.3-4.3"/></svg>
<span class="t" style="top:240.10px;font-size:26px;line-height:38px;color:#b2b2b6;transform:scaleX(1.0325);left:234.24px;">Search...</span>
<div class="b" style="left:536px;top:228px;width:102px;height:60px;background:#f4f4f5;border-radius:30px;"></div>
<span class="t" style="top:240.28px;font-size:24px;line-height:36px;color:#626266;transform:scaleX(1.0945);-webkit-text-stroke:0.35px #626266;left:557.00px;">All</span>
<svg class="i" style="left:594.00px;top:246.20px;" width="24" height="24" viewBox="0 0 24 24" fill="none" stroke="#626266" stroke-width="2.2" stroke-linecap="round" stroke-linejoin="round"><path d="m6 9 6 6 6-6"/></svg>
<div class="b" style="left:654.5px;top:228px;width:155.5px;height:60px;background:#f4f4f5;border-radius:30px;"></div>
<svg class="i" style="left:674.00px;top:244.30px;" width="28" height="28" viewBox="0 0 24 24" fill="none" stroke="#626266" stroke-width="2.1" stroke-linecap="round" stroke-linejoin="round"><path d="M10 20a1 1 0 0 0 .553.895l2 1A1 1 0 0 0 14 21v-7a2 2 0 0 1 .517-1.341L21.74 4.67A1 1 0 0 0 21 3H3a1 1 0 0 0-.742 1.67l7.225 7.989A2 2 0 0 1 10 14z"/></svg>
<span class="t" style="top:240.28px;font-size:24px;line-height:36px;color:#626266;transform:scaleX(1.0991);-webkit-text-stroke:0.35px #626266;left:709.76px;">+ Filtro</span>
<div class="b" style="left:826px;top:228px;width:416px;height:56px;border:2px solid #666;border-radius:30px;background:#fff;"></div>
<svg class="i" style="left:852.00px;top:244.00px;" width="28" height="28" viewBox="0 0 24 24" fill="none" stroke="#666" stroke-width="1.8" stroke-linecap="round" stroke-linejoin="round"><path d="M8 2v4"/><path d="M16 2v4"/><rect width="18" height="18" x="3" y="4" rx="2"/><path d="M3 10h18"/></svg>
<span class="t" style="top:240.28px;font-size:24px;line-height:36px;color:#666;transform:scaleX(1.0849);left:897.05px;">01/01/2026 - 31/12/2026</span>
<svg class="i" style="left:1196.00px;top:246.00px;" width="24" height="24" viewBox="0 0 24 24" fill="none" stroke="#666" stroke-width="2" stroke-linecap="round" stroke-linejoin="round"><path d="m6 9 6 6 6-6"/></svg>
<div class="b" style="left:1698px;top:226px;width:188px;height:60px;border:2px solid #111;border-radius:32px;background:#fff;"></div>
<span class="t" style="top:239.70px;font-size:26px;line-height:38px;color:#111;letter-spacing:0.180px;transform:scaleX(1.1000);-webkit-text-stroke:0.95px #111;left:1721.00px;">Actions</span>
<svg class="i" style="left:1836.00px;top:242.50px;" width="32" height="32" viewBox="0 0 24 24" fill="none" stroke="#111" stroke-width="2.2" stroke-linecap="round" stroke-linejoin="round"><path d="m6 9 6 6 6-6"/></svg>
<div class="b" style="left:1906px;top:226px;width:284px;height:64px;background:#006fee;border-radius:32px;"></div>
<svg class="i" style="left:1930.00px;top:242.00px;" width="32" height="32" viewBox="0 0 24 24" fill="none" stroke="#fff" stroke-width="1.9" stroke-linecap="round" stroke-linejoin="round"><path d="M5 12h14"/><path d="M12 5v14"/></svg>
<span class="t" style="top:239.80px;font-size:26px;line-height:38px;color:#fff;transform:scaleX(1.0693);-webkit-text-stroke:0.45px #fff;left:1972.73px;">New invoice</span>
<svg class="i" style="left:2138.00px;top:244.00px;" width="28" height="28" viewBox="0 0 24 24" fill="none" stroke="#b9d7fb" stroke-width="2" stroke-linecap="round" stroke-linejoin="round"><path d="m6 9 6 6 6-6"/></svg>
</section>
<aside aria-label="Odi assistant">
<div class="b" style="left:2238px;top:0px;width:2px;height:1800px;background:#f4f4f6;"></div>
<div class="b" style="left:2240px;top:0px;width:640px;height:1800px;background:#0f1a3a;"></div>
<div class="b" style="left:2240px;top:0px;width:640px;height:94px;background:#0f1733;"></div>
<div class="b" style="left:2240px;top:94px;width:640px;height:1.6px;background:#182344;"></div>
<svg class="i" style="left:2662.80px;top:29.80px;" width="36" height="36" viewBox="0 0 24 24" fill="none" stroke="#7681ac" stroke-width="1.9" stroke-linecap="round" stroke-linejoin="round"><path d="M12 3H5a2 2 0 0 0-2 2v14a2 2 0 0 0 2 2h14a2 2 0 0 0 2-2v-7"/><path d="M18.375 2.625a1 1 0 0 1 3 3l-9.013 9.014a2 2 0 0 1-.853.505l-2.873.84a.5.5 0 0 1-.62-.62l.84-2.873a2 2 0 0 1 .506-.852z"/></svg>
<svg class="i" style="left:2730.00px;top:30.40px;" width="36" height="36" viewBox="0 0 24 24" fill="none" stroke="#7681ac" stroke-width="1.9" stroke-linecap="round" stroke-linejoin="round"><path d="M21 15a2 2 0 0 1-2 2H7l-4 4V5a2 2 0 0 1 2-2h14a2 2 0 0 1 2 2z"/></svg>
<svg class="i" style="left:2799.50px;top:32.00px;" width="32" height="32" viewBox="0 0 24 24" fill="none" stroke="#7681ac" stroke-width="2.0" stroke-linecap="round" stroke-linejoin="round"><path d="m9 18 6-6-6-6"/></svg>
<div class="b" style="left:2296px;top:1108.00px;width:524px;height:76.8px;border:2px solid #273565;border-radius:23px;background:#101b3c;"></div>
<span class="t" style="top:1130.30px;font-size:26px;line-height:38px;color:#9ca8d0;transform:scaleX(1.0990);-webkit-text-stroke:0.85px #9ca8d0;left:2322.43px;">Create a $2,000 invoice</span>
<div class="b" style="left:2296px;top:1204.80px;width:524px;height:76.8px;border:2px solid #273565;border-radius:23px;background:#101b3c;"></div>
<span class="t" style="top:1227.10px;font-size:26px;line-height:38px;color:#9ca8d0;transform:scaleX(1.0563);-webkit-text-stroke:0.85px #9ca8d0;left:2323.67px;">Who owes me money?</span>
<div class="b" style="left:2296px;top:1301.60px;width:524px;height:76.8px;border:2px solid #273565;border-radius:23px;background:#101b3c;"></div>
<span class="t" style="top:1323.90px;font-size:26px;line-height:38px;color:#9ca8d0;letter-spacing:0.073px;transform:scaleX(1.1000);-webkit-text-stroke:0.85px #9ca8d0;left:2321.46px;">Record $150 office supplies</span>
<div class="b" style="left:2296px;top:1398.40px;width:524px;height:76.8px;border:2px solid #273565;border-radius:23px;background:#101b3c;"></div>
<span class="t" style="top:1420.70px;font-size:26px;line-height:38px;color:#9ca8d0;letter-spacing:0.162px;transform:scaleX(1.1000);-webkit-text-stroke:0.85px #9ca8d0;left:2321.46px;">How&#x27;s my tax this quarter?</span>
<div class="b" style="left:2240px;top:1660px;width:640px;height:140px;background:linear-gradient(#0f1a3a,#0e1836 6px);"></div>
<div class="b" style="left:2264px;top:1688px;width:592px;height:88px;background:#192048;border-radius:44px;"></div>
<svg class="i" style="left:2292.50px;top:1716.00px;" width="32" height="32" viewBox="0 0 24 24" fill="none" stroke="#a9b1cf" stroke-width="2.0" stroke-linecap="round" stroke-linejoin="round"><path d="m21.44 11.05-9.19 9.19a6 6 0 0 1-8.49-8.49l8.57-8.57A4 4 0 1 1 18 8.84l-8.59 8.57a2 2 0 0 1-2.83-2.83l8.49-8.48"/></svg>
<span class="t" style="top:1714.11px;font-size:27px;line-height:40px;color:#6c779e;transform:scaleX(1.0259);left:2381.27px;">Write to Odi...</span>
<div class="b" style="left:2780px;top:1700px;width:64px;height:64px;background:#a4a8be;border-radius:32px;"></div>
<svg class="i" style="left:2795.00px;top:1716.50px;" width="32" height="32" viewBox="0 0 24 24" fill="none" stroke="#141d40" stroke-width="2.0" stroke-linecap="round" stroke-linejoin="round"><path d="M14.536 21.686a.5.5 0 0 0 .937-.024l6.5-19a.496.496 0 0 0-.635-.635l-19 6.5a.5.5 0 0 0-.024.937l7.93 3.18a2 2 0 0 1 1.112 1.11z"/><path d="m21.854 2.147-10.94 10.939"/></svg>
</aside>
</div>
</body></html>
